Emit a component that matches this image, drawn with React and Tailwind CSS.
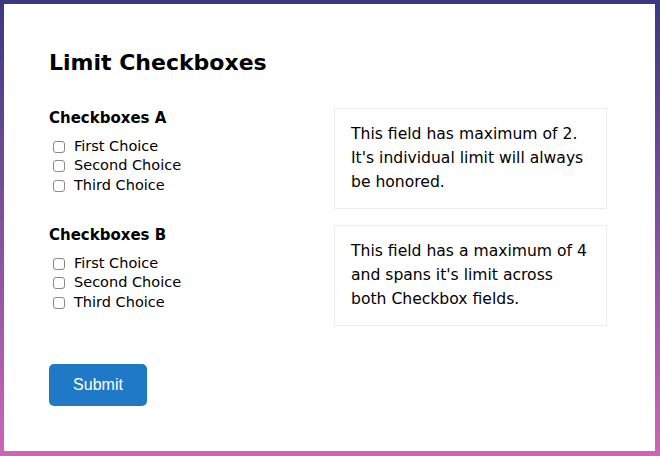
import { useState } from 'react';

const groups = [
  {
    title: 'Checkboxes A',
    note: "This field has maximum of 2. It's individual limit will always be honored.",
  },
  {
    title: 'Checkboxes B',
    note: "This field has a maximum of 4 and spans it's limit across both Checkbox fields.",
  },
];

const choices = ['First Choice', 'Second Choice', 'Third Choice'];

function CheckGroup({ title, note }) {
  return (
    <div className="flex">
      <div className="w-[285px]">
        <h2 className="text-[15px] leading-[20px] font-bold">{title}</h2>
        <div className="mt-[9px]">
          {choices.map((c) => (
            <label key={c} className="flex items-center h-[19.5px] text-[14.5px]">
              <span className="ml-[4px] mr-[9px] w-[12px] h-[12px] rounded-[3px] border border-[#8a8a8a] bg-white" />
              {c}
            </label>
          ))}
        </div>
      </div>
      <div className="w-[273px] h-[101px] border border-[#ececec] px-[16px] pt-[13px] text-[15.6px] leading-[24px]">
        {note}
      </div>
    </div>
  );
}

export default function App() {
  const [sent, setSent] = useState(false);

  return (
    <div className="w-[660px] h-[456px] bg-gradient-to-b from-[#3b3880] to-[#cc66b6] pt-[4px] pl-[4px] pr-[5px] pb-[5px] flex">
      <div
        className="flex-1 bg-white pl-[45px] pt-[45px] text-black"
        style={{ fontFamily: '"DejaVu Sans", sans-serif' }}
      >
        <h1 className="text-[22px] leading-[28px] font-bold">Limit Checkboxes</h1>
        <div className="mt-[31px] flex flex-col gap-[16px]">
          {groups.map((g) => (
            <CheckGroup key={g.title} {...g} />
          ))}
        </div>
        <button
          onClick={() => setSent(true)}
          className="mt-[38px] w-[98px] h-[42px] rounded-[5px] bg-[#2079c7] text-white text-[16px]"
          style={{ fontFamily: '"Liberation Sans", Arial, sans-serif' }}
        >
          {sent ? 'Submit' : 'Submit'}
        </button>
      </div>
    </div>
  );
}
